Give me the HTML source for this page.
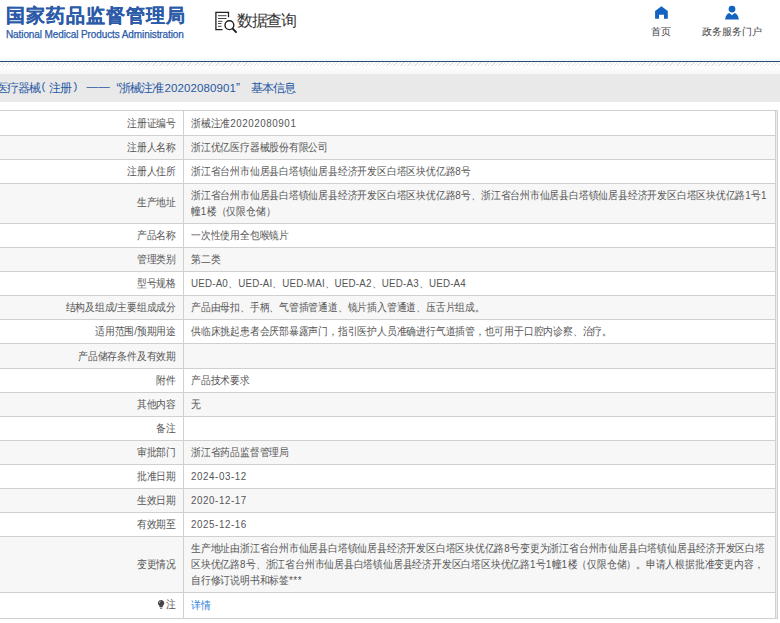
<!DOCTYPE html>
<html><head><meta charset="utf-8">
<style>
*{margin:0;padding:0;box-sizing:border-box}
html,body{width:780px;height:623px;overflow:hidden;background:#fff;font-family:"Liberation Sans",sans-serif;color:#444}
.abs{position:absolute;white-space:nowrap}
#logo{left:6px;top:3px;font-size:19px;font-weight:900;color:#2a5aa8;letter-spacing:1px;-webkit-text-stroke:0.1px #2a5aa8}
#logoen{left:6px;top:29px;font-size:10px;color:#2a5aa8;letter-spacing:-0.1px;-webkit-text-stroke:0.25px #2a5aa8}
#sjcx{left:237px;top:10.5px;font-size:16px;letter-spacing:-1.3px;color:#333}
.nav{font-size:10px;color:#444}
#blueline{left:0;top:61px;width:780px;height:1px;background:#284c78;}
#cyan{left:0;top:59px;width:780px;height:2px;background:#f0fcfc}
#hatch{left:0;top:62px;width:780px;height:4px;background:repeating-linear-gradient(135deg,#fff 0,#fff 1.6px,#e4e4e4 1.6px,#e4e4e4 2.47px)}
#fade{left:0;top:66px;width:780px;height:8px;background:linear-gradient(#fff,#f6f6f6)}
#band{left:0;top:74px;width:780px;height:28px;background:#e9e9e9}
.title{font-size:12px;letter-spacing:-1px;color:#2758a3}
.row{position:absolute;left:0;width:776px;border-bottom:1px solid #d0d0d0}
.g{background:#f7f7f7}
.lab{position:absolute;right:600px;white-space:nowrap;font-size:11px;color:#555;text-align:right;transform:scaleX(0.89);transform-origin:100% 0}
.val{position:absolute;left:191px;white-space:nowrap;font-size:11px;color:#555;line-height:16px;transform:scaleX(0.89);transform-origin:0 0}
.a{letter-spacing:0.2px}
.d{letter-spacing:0.65px}
.hl{position:absolute;left:0;width:778px;height:1px;background:#d0d0d0}
.pin{display:inline-block;width:7px;height:9px;vertical-align:middle}
.lnk{color:#2f7fe0}
</style></head><body>
<div class="abs" id="logo">国家药品监督管理局</div>
<div class="abs" id="logoen">National Medical Products Administration</div>
<svg class="abs" style="left:210px;top:5px" width="30" height="32" viewBox="0 0 30 32">
<path d="M18.5 12.2V7.3H5.9V24.6H12.5" fill="none" stroke="#222" stroke-width="1.3"/>
<path d="M8 10.7H16.5M8 13.5H16.5M8 16.3H12.5M8 18.5H11.5M8 21.3H11.5" stroke="#444" stroke-width="1"/>
<circle cx="19.4" cy="20.2" r="4.4" fill="none" stroke="#222" stroke-width="1.4"/>
<path d="M22.6 23.6L26 27" stroke="#222" stroke-width="1.9" stroke-linecap="round"/>
</svg>
<div class="abs" id="sjcx">数据查询</div>
<svg class="abs" style="left:650px;top:2px" width="24" height="20" viewBox="0 0 24 20">
<path d="M11.4 4.2L17.8 9.1V16.7H14V12.8H9V16.7H5.1V9.1Z" fill="#1462c2"/>
</svg>
<div class="abs nav" style="left:651px;top:25px">首页</div>
<svg class="abs" style="left:720px;top:2px" width="24" height="20" viewBox="0 0 24 20">
<circle cx="12" cy="7.1" r="3.4" fill="#1462c2"/>
<path d="M5.1 17.6C5.5 14 7 11.7 9.3 11.1L12 13.2L14.5 11.1C17 11.7 18.5 14 18.8 17.6Z" fill="#1462c2"/>
</svg>
<div class="abs nav" style="left:702px;top:25px">政务服务门户</div>
<div class="abs" id="cyan"></div>
<div class="abs" id="blueline"></div>
<div class="abs" id="hatch"></div>
<div class="abs" id="fade"></div>
<div class="abs" id="band"></div>
<div class="abs title" style="left:-4.5px;top:79.5px">医疗器械</div>
<div class="abs title" style="left:41.5px;top:79.5px;font-size:11.5px">(</div>
<div class="abs title" style="left:49px;top:79.5px">注册</div>
<div class="abs title" style="left:73.5px;top:79.5px;font-size:11.5px">)</div>
<div class="abs title" style="left:86.5px;top:79.5px;letter-spacing:0.3px;font-size:11.5px">——</div>
<div class="abs title" style="left:116.5px;top:79.5px">“浙械注准<span style="font-size:11.5px;letter-spacing:0.1px;margin-left:1px">20202080901</span>”</div>
<div class="abs title" style="left:251px;top:79.5px">基本信息</div>

<div id="tbl">
<div class="hl" style="top:110px"></div>
<div class="row" style="top:111px;height:25px">
<div class="lab" style="top:0;line-height:24px">注册证编号</div>
<div class="val" style="top:4px">浙械注准<span class="d">20202080901</span></div></div>
<div class="row g" style="top:136px;height:24px">
<div class="lab" style="top:0;line-height:23px">注册人名称</div>
<div class="val" style="top:3px">浙江优亿医疗器械股份有限公司</div></div>
<div class="row" style="top:160px;height:24px">
<div class="lab" style="top:0;line-height:23px">注册人住所</div>
<div class="val" style="top:3px">浙江省台州市仙居县白塔镇仙居县经济开发区白塔区块优亿路<span class="d">8</span>号</div></div>
<div class="row g" style="top:184px;height:40px">
<div class="lab" style="top:-1px;line-height:39px">生产地址</div>
<div class="val" style="top:3px">浙江省台州市仙居县白塔镇仙居县经济开发区白塔区块优亿路<span class="d">8</span>号、浙江省台州市仙居县白塔镇仙居县经济开发区白塔区块优亿路<span class="d">1</span>号<span class="d">1</span><br>幢<span class="d">1</span>楼（仅限仓储）</div></div>
<div class="row" style="top:224px;height:24px">
<div class="lab" style="top:0;line-height:23px">产品名称</div>
<div class="val" style="top:3px">一次性使用全包喉镜片</div></div>
<div class="row g" style="top:248px;height:24px">
<div class="lab" style="top:0;line-height:23px">管理类别</div>
<div class="val" style="top:3px">第二类</div></div>
<div class="row" style="top:272px;height:24px">
<div class="lab" style="top:0;line-height:23px">型号规格</div>
<div class="val" style="top:3px"><span class="a">UED-A</span><span class="d">0</span>、<span class="a">UED-AI</span>、<span class="a">UED-MAI</span>、<span class="a">UED-A</span><span class="d">2</span>、<span class="a">UED-A</span><span class="d">3</span>、<span class="a">UED-A</span><span class="d">4</span></div></div>
<div class="row g" style="top:296px;height:24px">
<div class="lab" style="top:0;line-height:23px">结构及组成/主要组成成分</div>
<div class="val" style="top:3px">产品由母扣、手柄、气管插管通道、镜片插入管通道、压舌片组成。</div></div>
<div class="row" style="top:320px;height:24px">
<div class="lab" style="top:0;line-height:23px">适用范围/预期用途</div>
<div class="val" style="top:3px">供临床挑起患者会厌部暴露声门，指引医护人员准确进行气道插管，也可用于口腔内诊察、治疗。</div></div>
<div class="row g" style="top:344px;height:25px">
<div class="lab" style="top:0;line-height:24px">产品储存条件及有效期</div>
<div class="val" style="top:4px"></div></div>
<div class="row" style="top:369px;height:24px">
<div class="lab" style="top:0;line-height:23px">附件</div>
<div class="val" style="top:3px">产品技术要求</div></div>
<div class="row g" style="top:393px;height:24px">
<div class="lab" style="top:0;line-height:23px">其他内容</div>
<div class="val" style="top:3px">无</div></div>
<div class="row" style="top:417px;height:24px">
<div class="lab" style="top:0;line-height:23px">备注</div>
<div class="val" style="top:3px"></div></div>
<div class="row g" style="top:441px;height:24px">
<div class="lab" style="top:0;line-height:23px">审批部门</div>
<div class="val" style="top:3px">浙江省药品监督管理局</div></div>
<div class="row" style="top:465px;height:24px">
<div class="lab" style="top:0;line-height:23px">批准日期</div>
<div class="val" style="top:3px"><span class="d">2024-03-12</span></div></div>
<div class="row g" style="top:489px;height:24px">
<div class="lab" style="top:0;line-height:23px">生效日期</div>
<div class="val" style="top:3px"><span class="d">2020-12-17</span></div></div>
<div class="row" style="top:513px;height:24px">
<div class="lab" style="top:0;line-height:23px">有效期至</div>
<div class="val" style="top:3px"><span class="d">2025-12-16</span></div></div>
<div class="row g" style="top:537px;height:56px">
<div class="lab" style="top:0;line-height:55px">变更情况</div>
<div class="val" style="top:3px">生产地址由浙江省台州市仙居县白塔镇仙居县经济开发区白塔区块优亿路<span class="d">8</span>号变更为浙江省台州市仙居县白塔镇仙居县经济开发区白塔<br>区块优亿路<span class="d">8</span>号、浙江省台州市仙居县白塔镇仙居县经济开发区白塔区块优亿路<span class="d">1</span>号<span class="d">1</span>幢<span class="d">1</span>楼（仅限仓储）。申请人根据批准变更内容，<br>自行修订说明书和标签<span class="d">***</span></div></div>
<div class="row" style="top:593px;height:26px">
<div class="lab" style="top:0;line-height:23px">注</div>
<div class="val" style="top:4px"><span class="lnk">详情</span></div></div>

<div class="abs" style="left:183px;top:110px;width:1px;height:508px;background:#d0d0d0"></div>
<div class="abs" style="left:775px;top:110px;width:1px;height:508px;background:#d0d0d0"></div>
<div class="abs" style="left:777px;top:110px;width:1px;height:509px;background:#d0d0d0"></div>
<div class="abs" style="left:0;top:618px;width:778px;height:1px;background:#d0d0d0"></div>
<svg class="abs" style="left:156px;top:598px" width="10" height="12" viewBox="0 0 10 12">
<path d="M5.1 1.9C3.3 1.9 1.9 3.3 1.9 5.1C1.9 6.3 2.5 7.1 3.3 7.8L3.6 9.3H6.6L6.9 7.8C7.7 7.1 8.3 6.3 8.3 5.1C8.3 3.3 6.9 1.9 5.1 1.9Z" fill="#464646"/>
<rect x="4" y="9.8" width="2.2" height="1.1" fill="#777"/>
<path d="M3.3 5C3.4 4.1 3.9 3.4 4.6 3.2" stroke="#ccc" stroke-width="0.8" fill="none"/>
</svg>
<div class="abs" style="left:776px;top:111px;width:1px;height:507px;background:#ececec"></div>
</div>
</body></html>
